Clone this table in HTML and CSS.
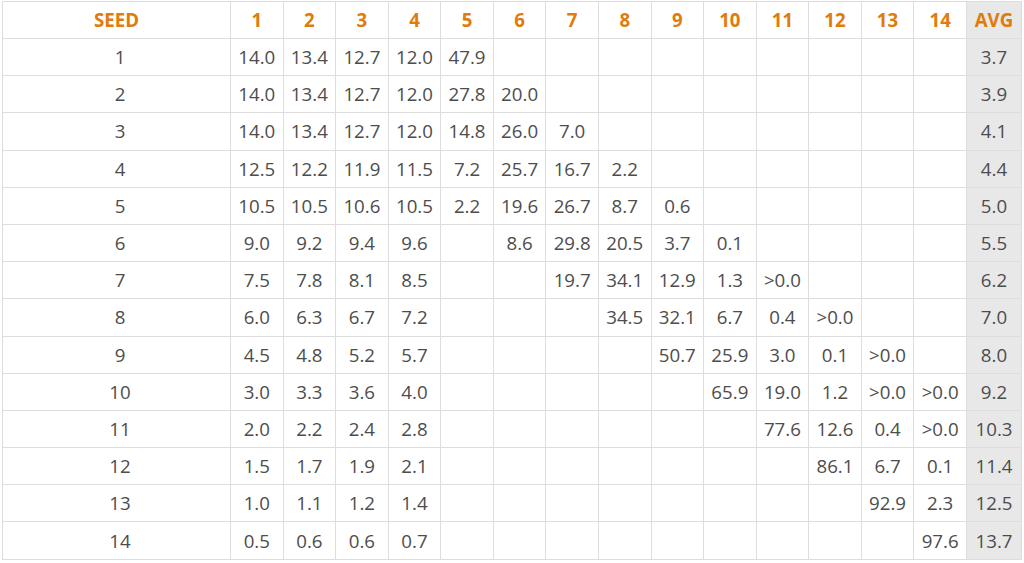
FILE: index.html
```html
<!DOCTYPE html>
<html>
<head>
<meta charset="utf-8">
<link rel="stylesheet" href="styles.css">
</head>
<body>
<div class="wrap">
<table class="grid">
<colgroup><col class="c-seed"><col span="14"><col class="c-avg"></colgroup>
<thead>
<tr><th>SEED</th><th>1</th><th>2</th><th>3</th><th>4</th><th>5</th><th>6</th><th>7</th><th>8</th><th>9</th><th>10</th><th>11</th><th>12</th><th>13</th><th>14</th><th class="avg">AVG</th></tr>
</thead>
<tbody>
<tr><td class="seed">1</td><td>14.0</td><td>13.4</td><td>12.7</td><td>12.0</td><td>47.9</td><td></td><td></td><td></td><td></td><td></td><td></td><td></td><td></td><td></td><td class="avg">3.7</td></tr>
<tr><td class="seed">2</td><td>14.0</td><td>13.4</td><td>12.7</td><td>12.0</td><td>27.8</td><td>20.0</td><td></td><td></td><td></td><td></td><td></td><td></td><td></td><td></td><td class="avg">3.9</td></tr>
<tr><td class="seed">3</td><td>14.0</td><td>13.4</td><td>12.7</td><td>12.0</td><td>14.8</td><td>26.0</td><td>7.0</td><td></td><td></td><td></td><td></td><td></td><td></td><td></td><td class="avg">4.1</td></tr>
<tr><td class="seed">4</td><td>12.5</td><td>12.2</td><td>11.9</td><td>11.5</td><td>7.2</td><td>25.7</td><td>16.7</td><td>2.2</td><td></td><td></td><td></td><td></td><td></td><td></td><td class="avg">4.4</td></tr>
<tr><td class="seed">5</td><td>10.5</td><td>10.5</td><td>10.6</td><td>10.5</td><td>2.2</td><td>19.6</td><td>26.7</td><td>8.7</td><td>0.6</td><td></td><td></td><td></td><td></td><td></td><td class="avg">5.0</td></tr>
<tr><td class="seed">6</td><td>9.0</td><td>9.2</td><td>9.4</td><td>9.6</td><td></td><td>8.6</td><td>29.8</td><td>20.5</td><td>3.7</td><td>0.1</td><td></td><td></td><td></td><td></td><td class="avg">5.5</td></tr>
<tr><td class="seed">7</td><td>7.5</td><td>7.8</td><td>8.1</td><td>8.5</td><td></td><td></td><td>19.7</td><td>34.1</td><td>12.9</td><td>1.3</td><td>&gt;0.0</td><td></td><td></td><td></td><td class="avg">6.2</td></tr>
<tr><td class="seed">8</td><td>6.0</td><td>6.3</td><td>6.7</td><td>7.2</td><td></td><td></td><td></td><td>34.5</td><td>32.1</td><td>6.7</td><td>0.4</td><td>&gt;0.0</td><td></td><td></td><td class="avg">7.0</td></tr>
<tr><td class="seed">9</td><td>4.5</td><td>4.8</td><td>5.2</td><td>5.7</td><td></td><td></td><td></td><td></td><td>50.7</td><td>25.9</td><td>3.0</td><td>0.1</td><td>&gt;0.0</td><td></td><td class="avg">8.0</td></tr>
<tr><td class="seed">10</td><td>3.0</td><td>3.3</td><td>3.6</td><td>4.0</td><td></td><td></td><td></td><td></td><td></td><td>65.9</td><td>19.0</td><td>1.2</td><td>&gt;0.0</td><td>&gt;0.0</td><td class="avg">9.2</td></tr>
<tr><td class="seed">11</td><td>2.0</td><td>2.2</td><td>2.4</td><td>2.8</td><td></td><td></td><td></td><td></td><td></td><td></td><td>77.6</td><td>12.6</td><td>0.4</td><td>&gt;0.0</td><td class="avg">10.3</td></tr>
<tr><td class="seed">12</td><td>1.5</td><td>1.7</td><td>1.9</td><td>2.1</td><td></td><td></td><td></td><td></td><td></td><td></td><td></td><td>86.1</td><td>6.7</td><td>0.1</td><td class="avg">11.4</td></tr>
<tr><td class="seed">13</td><td>1.0</td><td>1.1</td><td>1.2</td><td>1.4</td><td></td><td></td><td></td><td></td><td></td><td></td><td></td><td></td><td>92.9</td><td>2.3</td><td class="avg">12.5</td></tr>
<tr><td class="seed">14</td><td>0.5</td><td>0.6</td><td>0.6</td><td>0.7</td><td></td><td></td><td></td><td></td><td></td><td></td><td></td><td></td><td></td><td>97.6</td><td class="avg">13.7</td></tr>
</tbody>
</table>
</div>
</body>
</html>
```

FILE: styles.css
```css
html, body {
  margin: 0;
  padding: 0;
  background: #ffffff;
}
.wrap {
  padding: 1px 2px 0 2px;
}
.grid {
  width: 1020px;
  table-layout: fixed;
  border-collapse: collapse;
  font-family: "Open Sans", "Liberation Sans", sans-serif;
  font-size: 18.7px;
  color: #4d4d4d;
}
.c-seed { width: 228px; }
.c-avg { width: 55px; }
.grid th, .grid td {
  border: 1px solid #dddddd;
  padding: 0;
  text-align: center;
  white-space: nowrap;
  line-height: 22px;
}
.grid thead tr { height: 37px; }
.grid tbody tr { height: 37.2px; }
.grid th {
  color: #e07b0c;
  font-weight: 700;
}
.grid td.seed { padding-left: 7px; }
.grid .avg { background: #e8e8e8; }
```
